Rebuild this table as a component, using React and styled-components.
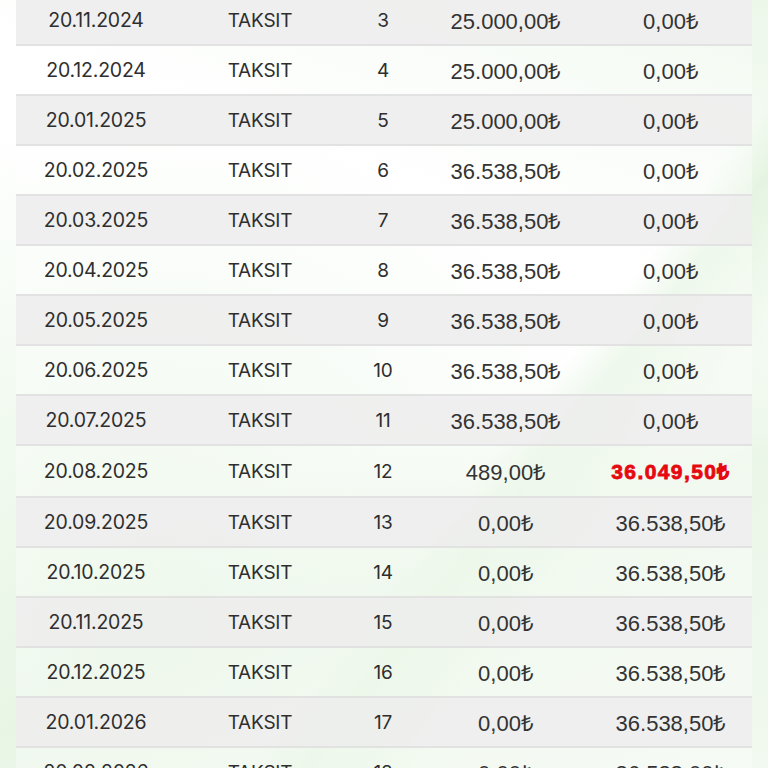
import React from "react";
import styled, { createGlobalStyle } from "styled-components";

const Global = createGlobalStyle`
  html, body { margin: 0; padding: 0; }
  body {
    width: 768px;
    height: 768px;
    overflow: hidden;
    background-color: #ffffff;
    background-image:
      linear-gradient(128deg, transparent 0%, transparent 62%, rgba(226,243,222,0.85) 66%, rgba(236,247,233,0.6) 74%, transparent 80%),
      linear-gradient(160deg, transparent 0%, transparent 55%, rgba(232,245,229,0.9) 70%, rgba(240,248,238,0.9) 100%),
      radial-gradient(ellipse at 20% 85%, rgba(226,244,222,0.9) 0%, rgba(236,248,234,0.6) 35%, transparent 60%),
      linear-gradient(200deg, rgba(234,246,231,0.9) 0%, transparent 30%);
    font-family: "Inter", "Liberation Sans", sans-serif;
  }
`;

const Page = styled.div`
  padding: 0 16px;
  margin-top: -4px;
`;

const Table = styled.div`
  display: flex;
  flex-direction: column;
  width: 736px;
`;

const Row = styled.div`
  display: grid;
  grid-template-columns: 160px 168px 78px 168px 162px;
  align-items: center;
  height: ${(p) => (p.$tall ? 52 : 50)}px;
  box-sizing: border-box;
  border-bottom: 2px solid #e2e2e2;
  background: ${(p) => (p.$shaded ? "rgba(238,238,238,0.92)" : "rgba(255,255,255,0.35)")};
`;

const Cell = styled.div`
  text-align: center;
  font-family: "Inter", "Liberation Sans", sans-serif;
  font-size: ${(p) => (p.$date ? 19.5 : 19)}px;
  font-weight: 400;
  color: #2e2e2e;
  letter-spacing: -0.2px;
  white-space: nowrap;
`;

const Amount = styled(Cell)`
  font-family: "Liberation Sans", Arial, sans-serif;
  font-size: 22px;
  color: #333333;
  letter-spacing: 0;
`;

const Highlight = styled(Cell)`
  font-family: "Liberation Sans", Arial, sans-serif;
  font-size: 21px;
  font-weight: 700;
  color: #e60a10;
  letter-spacing: 1.4px;
  -webkit-text-stroke: 0.8px #e60a10;
`;

const rows = [
  ["20.11.2024", 3, "25.000,00₺", "0,00₺"],
  ["20.12.2024", 4, "25.000,00₺", "0,00₺"],
  ["20.01.2025", 5, "25.000,00₺", "0,00₺"],
  ["20.02.2025", 6, "36.538,50₺", "0,00₺"],
  ["20.03.2025", 7, "36.538,50₺", "0,00₺"],
  ["20.04.2025", 8, "36.538,50₺", "0,00₺"],
  ["20.05.2025", 9, "36.538,50₺", "0,00₺"],
  ["20.06.2025", 10, "36.538,50₺", "0,00₺"],
  ["20.07.2025", 11, "36.538,50₺", "0,00₺"],
  ["20.08.2025", 12, "489,00₺", "36.049,50₺", true],
  ["20.09.2025", 13, "0,00₺", "36.538,50₺"],
  ["20.10.2025", 14, "0,00₺", "36.538,50₺"],
  ["20.11.2025", 15, "0,00₺", "36.538,50₺"],
  ["20.12.2025", 16, "0,00₺", "36.538,50₺"],
  ["20.01.2026", 17, "0,00₺", "36.538,50₺"],
  ["20.02.2026", 18, "0,00₺", "36.538,00₺"],
];

export default function App() {
  return (
    <>
      <Global />
      <Page>
        <Table>
          {rows.map(([date, no, paid, rest, hl]) => (
            <Row key={no} $shaded={no % 2 === 1} $tall={hl}>
              <Cell $date>{date}</Cell>
              <Cell>TAKSIT</Cell>
              <Cell>{no}</Cell>
              <Amount>{paid}</Amount>
              {hl ? <Highlight>{rest}</Highlight> : <Amount>{rest}</Amount>}
            </Row>
          ))}
        </Table>
      </Page>
    </>
  );
}
